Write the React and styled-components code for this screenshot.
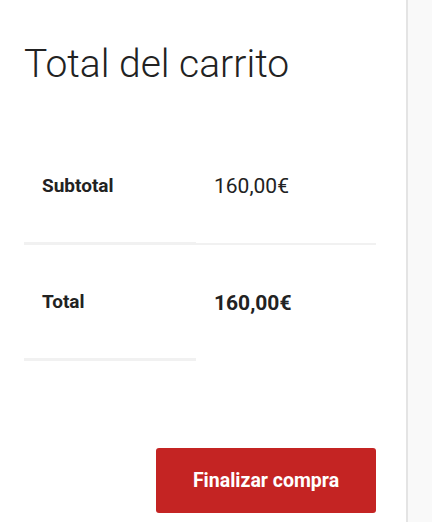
import React from 'react'
import styled, { createGlobalStyle } from 'styled-components'

const GlobalStyle = createGlobalStyle`
    html, body {
        margin: 0;
        padding: 0;
        background: #f9f9f9;
        font-family: Roboto, "Liberation Sans", sans-serif;
        color: #222;
    }
`

const Page = styled.div`
    display: flex;
    height: 522px;
    overflow: hidden;
`

const Main = styled.div`
    width: 408px;
    background: #fff;
    border-right: 2px solid #e4e4e4;
    padding: 40px 30px 0 24px;
    box-sizing: border-box;
    display: flex;
    flex-direction: column;
`

const Title = styled.h2`
    margin: 0;
    font-weight: 300;
    font-size: 39px;
    line-height: 48px;
    color: #222;
`

const Table = styled.table`
    margin-top: 41px;
    width: 352px;
    border-collapse: separate;
    border-spacing: 0;
`

const Th = styled.th`
    width: 172px;
    padding: 48px 18px;
    text-align: left;
    font-size: 19px;
    line-height: 17px;
    font-weight: 700;
    border-bottom: 3px solid #f1f1f1;
    box-sizing: border-box;
    vertical-align: middle;
`

const Td = styled.td`
    padding: 48px 18px;
    font-size: 21px;
    line-height: 17px;
    font-weight: ${p => (p.$strong ? 700 : 400)};
    border-bottom: ${p => (p.$last ? 'none' : '2px solid #f1f1f1')};
    vertical-align: middle;
`

const Actions = styled.div`
    display: flex;
    justify-content: flex-end;
    margin-top: 87px;
`

const Checkout = styled.button`
    width: 220px;
    height: 65px;
    border: none;
    border-radius: 3px;
    background: #c42423;
    color: #fff;
    font-family: Roboto, "Liberation Sans", sans-serif;
    font-size: 19.5px;
    font-weight: 700;
    cursor: pointer;
`

const rows = [
    { label: 'Subtotal', value: '160,00€' },
    { label: 'Total', value: '160,00€', strong: true },
]

export default function App() {
    return (
        <>
            <GlobalStyle />
            <Page>
                <Main>
                    <Title>Total del carrito</Title>
                    <Table>
                        <tbody>
                            {rows.map((r, i) => (
                                <tr key={r.label}>
                                    <Th>{r.label}</Th>
                                    <Td $strong={r.strong} $last={i === rows.length - 1}>{r.value}</Td>
                                </tr>
                            ))}
                        </tbody>
                    </Table>
                    <Actions>
                        <Checkout>Finalizar compra</Checkout>
                    </Actions>
                </Main>
            </Page>
        </>
    )
}
